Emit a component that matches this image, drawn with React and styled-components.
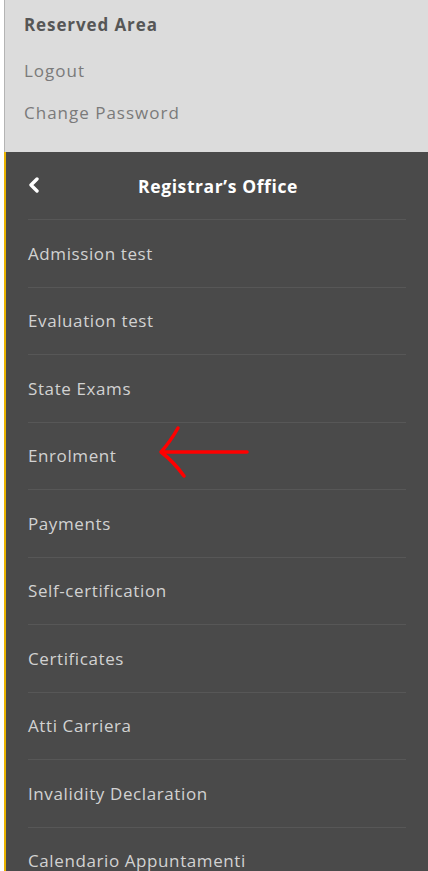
import React from 'react'
import styled, { createGlobalStyle } from 'styled-components'

const GlobalStyle = createGlobalStyle`
  html, body {
    margin: 0;
    padding: 0;
    background: #fff;
  }
  body {
    font-family: 'Open Sans', 'Noto Sans', sans-serif;
  }
`

const Sidebar = styled.aside`
  position: relative;
  width: 424px;
  margin-left: 4px;
  height: 871px;
  overflow: hidden;
`

const UserPanel = styled.div`
  height: 152px;
  box-sizing: border-box;
  background: #dcdcdc;
  border-left: 1px solid #b4b4b4;
  padding: 14px 19px 0;
  display: flex;
  flex-direction: column;
`

const UserLink = styled.a`
  display: block;
  font-size: 17px;
  line-height: 22px;
  letter-spacing: ${p => (p.$title ? '0.9px' : '1px')};
  color: ${p => (p.$title ? '#565656' : '#7a7a7a')};
  font-weight: ${p => (p.$title ? 700 : 400)};
  margin-bottom: ${p => (p.$title ? '24px' : '20px')};
  text-decoration: none;
`

const Menu = styled.nav`
  background: #4a4a4a;
  border-left: 2px solid #e9b300;
  padding: 0 22px 0 22px;
  min-height: 719px;
`

const MenuHeader = styled.div`
  height: 67px;
  display: flex;
  align-items: center;
  position: relative;
  border-bottom: 1px solid #575757;
`

const Back = styled.span`
  position: absolute;
  left: 0;
  top: 25px;
  display: flex;
`

const HeaderTitle = styled.h2`
  flex: 1;
  margin: 0;
  padding-left: 2px;
  text-align: center;
  font-size: 17.5px;
  font-weight: 700;
  color: #fff;
  letter-spacing: 0.6px;
`

const Item = styled.a`
  display: flex;
  align-items: center;
  height: 66.5px;
  border-bottom: 1px solid #575757;
  font-size: 17px;
  color: #d2d2d2;
  text-decoration: none;
  letter-spacing: 0.6px;
`

const Pointer = styled.svg`
  position: absolute;
  left: 150px;
  top: 420px;
`

const items = [
  'Admission test',
  'Evaluation test',
  'State Exams',
  'Enrolment',
  'Payments',
  'Self-certification',
  'Certificates',
  'Atti Carriera',
  'Invalidity Declaration',
  'Calendario Appuntamenti',
]

export default function App() {
  return (
    <>
      <GlobalStyle />
      <Sidebar>
        <UserPanel>
          <UserLink $title>Reserved Area</UserLink>
          <UserLink>Logout</UserLink>
          <UserLink>Change Password</UserLink>
        </UserPanel>
        <Menu>
          <MenuHeader>
            <Back>
              <svg width="12" height="16" viewBox="0 0 12 16">
                <path d="M9 2 L3 8 L9 14" fill="none" stroke="#fff" strokeWidth="3.4" strokeLinecap="round" strokeLinejoin="round" />
              </svg>
            </Back>
            <HeaderTitle>Registrar’s Office</HeaderTitle>
          </MenuHeader>
          {items.map(name => (
            <Item key={name}>{name}</Item>
          ))}
        </Menu>
        <Pointer width="100" height="64" viewBox="0 0 100 64">
          <path d="M93 32 L8 32 M24 8 Q16 22 7 32 Q20 42 30 56" fill="none" stroke="#ff0000" strokeWidth="3.5" strokeLinecap="round" strokeLinejoin="round" />
        </Pointer>
      </Sidebar>
    </>
  )
}
